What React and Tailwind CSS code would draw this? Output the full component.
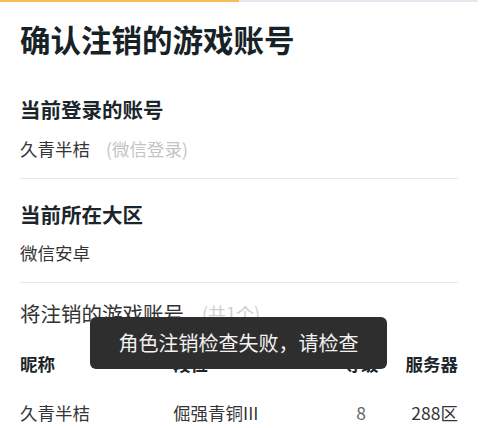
import React from "react";

export default function App() {
  const font = { fontFamily: '"Noto Sans CJK SC", "Noto Sans", sans-serif' };
  return (
    <div className="relative w-[500px] h-[428px] overflow-hidden bg-white" style={font}>
      <div className="flex w-[478px] h-[2px]">
        <div className="w-[239px] bg-[#f6bc55]" />
        <div className="flex-1 bg-[#e4e8f0]" />
      </div>
      <div className="pl-5 w-[458px]">
        <div className="mt-[17px] text-[30.5px] leading-[40px] font-bold text-[#172227]">确认注销的游戏账号</div>

        <div className="mt-[36px] text-[20.5px] leading-[28px] font-bold text-[#1c2529]">当前登录的账号</div>
        <div className="mt-[14px] flex items-center text-[17.5px] leading-[24px] text-[#353535]">
          <span>久青半桔</span>
          <span className="ml-4 text-[#c4c4c4]">(微信登录)</span>
        </div>
        <div className="mt-[17px] h-px bg-[#e8e8e8]" />

        <div className="mt-[21px] text-[20.5px] leading-[28px] font-bold text-[#1c2529]">当前所在大区</div>
        <div className="mt-[13px] text-[17.5px] leading-[24px] text-[#353535]">微信安卓</div>
        <div className="mt-[17px] h-px bg-[#e8e8e8]" />

        <div className="mt-[16px] flex items-center text-[20.5px] leading-[28px] text-[#333]">
          <span>将注销的游戏账号</span>
          <span className="ml-[18px] text-[18px] text-[#cfcfcf]">(共1个)</span>
        </div>

        <div className="mt-[25px] grid grid-cols-[153px_160px_56px_1fr] text-[17.5px] leading-[24px] font-bold text-[#1c2529]">
          <span>昵称</span>
          <span>段位</span>
          <span className="text-center">等级</span>
          <span className="text-right">服务器</span>
        </div>
        <div className="mt-[25px] grid grid-cols-[153px_160px_56px_1fr] text-[17.5px] leading-[24px] text-[#353535]">
          <span>久青半桔</span>
          <span>倔强青铜III</span>
          <span className="text-center text-[#666]">8</span>
          <span className="text-right">288区</span>
        </div>
      </div>

      <div className="absolute left-[90px] top-[317px] w-[297px] h-[52px] rounded-md bg-[#2e2e2e] flex items-center justify-center text-[20px] text-[#f2f2f2]">
        角色注销检查失败，请检查
      </div>
    </div>
  );
}
